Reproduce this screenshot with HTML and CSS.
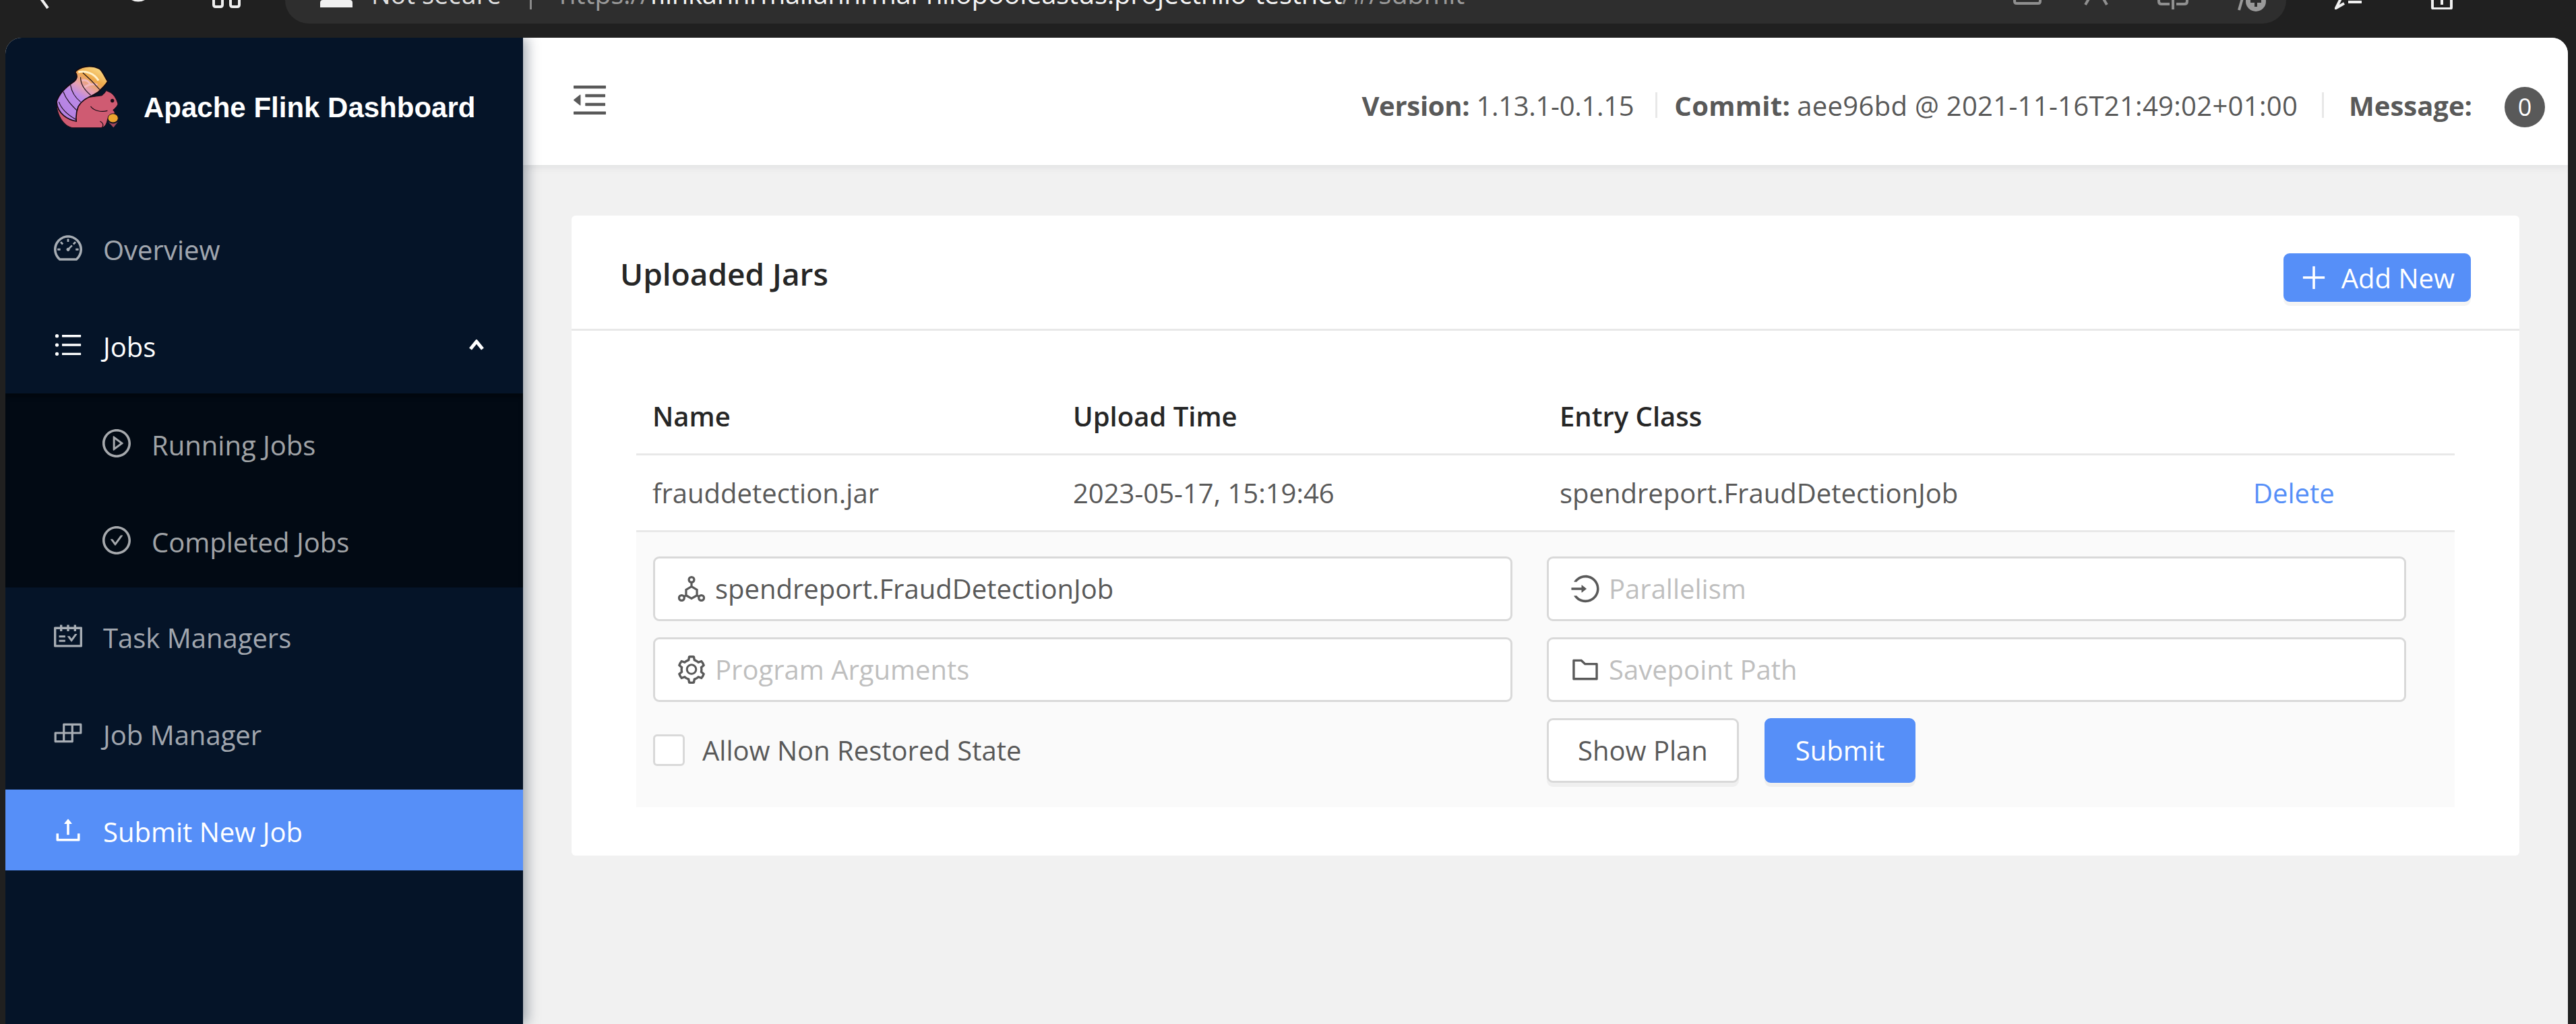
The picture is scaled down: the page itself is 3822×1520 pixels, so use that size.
FILE: index.html
```html
<!DOCTYPE html>
<html lang="en">
<head>
    <meta charset="UTF-8">
    <title>Apache Flink Dashboard</title>
    <link rel="stylesheet" href="styles.css">
</head>
<body>

    <!-- Browser toolbar, cut off by the top of the screenshot -->
    <div class="browser-bar">
        <svg class="bar-icon back-icon" viewBox="0 0 20 40"><path d="M2 -10 L18 12"/></svg>
        <svg class="bar-icon reload-icon" viewBox="0 0 44 40"><path d="M5 -10 A 19 19 0 0 0 39 -10"/></svg>
        <svg class="bar-icon tabs-icon" viewBox="0 0 44 40"><path d="M3 -8 V7 Q3 10 6 10 H13 Q16 10 16 7 V-8 M28 -8 V7 Q28 10 31 10 H38 Q41 10 41 7 V-8"/></svg>
        <div class="address-bar">
            <svg class="lock-icon" viewBox="0 0 48 12"><path d="M4 0 H16 A7 7 0 0 1 32 0 H44 Q48 0 48 4 V11 H0 V4 Q0 0 4 0 Z"/></svg>
            <span class="not-secure">Not secure</span>
            <span class="address-sep"></span>
            <span class="url"><span class="url-dim">https://</span>flinkahnrmaliahnrmal-hilopooleastus.projecthilo-testnet<span class="url-dim">/#/submit</span></span>
            <span class="address-tools">
                <svg class="bar-icon tool-a" viewBox="0 0 42 10"><path d="M2 -10 V2 Q2 5 5 5 H37 Q40 5 40 2 V-10"/></svg>
                <svg class="bar-icon tool-b" viewBox="0 0 36 10"><path d="M12 -10 L2 7 M24 -10 L34 7"/></svg>
                <svg class="bar-icon tool-c" viewBox="0 0 46 16"><path d="M2 -8 V2 Q2 6 6 6 H18 M23 -8 V14 M28 6 H40 Q44 6 44 2 V-8"/></svg>
                <svg class="tool-d" viewBox="0 0 42 18"><path class="tool-d-line" d="M2 15 L8 -6"/><circle cx="27" cy="2" r="15"/><path class="tool-d-plus" d="M27 -6 V10 M19 2 H35"/></svg>
            </span>
        </div>
        <svg class="bar-icon fav-icon" viewBox="0 0 42 14"><path d="M12 -8 L2 12 L14 5 M20 3 H40"/></svg>
        <svg class="bar-icon share-icon" viewBox="0 0 38 14"><path d="M2 -8 L8 0 M8 -6 V11 Q8 13 10 13 H34 Q36 13 36 11 V-6 M22 -4 V7"/></svg>
    </div>

    <div class="app">
        <!-- Sidebar -->
        <aside class="sidebar">
            <div class="logo">
                <svg class="logo-img" viewBox="95 62 280 280">
                    <defs>
                        <linearGradient id="tailFill" x1="0.75" y1="0" x2="0.2" y2="1">
                            <stop offset="0" stop-color="#f9d680"/>
                            <stop offset="0.2" stop-color="#eea94a"/>
                            <stop offset="0.38" stop-color="#e6a0b0"/>
                            <stop offset="0.55" stop-color="#bb8ae8"/>
                            <stop offset="1" stop-color="#b37fe0"/>
                        </linearGradient>
                    </defs>
                    <path class="logo-body" d="M98 235 C120 220 240 205 300 197 C310 190 315 182 320 175 L333 181 C352 188 366 212 372 235 C366 250 356 256 350 262 C360 270 360 280 350 285 L326 300 C322 320 318 335 300 341 L170 341 C130 335 100 285 98 235 Z"/>
                    <path class="logo-tail" d="M186 312 C150 305 102 280 98 225 C108 188 138 160 175 135 C192 122 192 105 181 92 C200 68 250 58 290 78 C305 90 315 118 326 133 C318 150 300 165 285 180 C260 200 215 208 195 245 C185 270 184 295 186 312 Z"/>
                    <path class="logo-feather" d="M195 92 C225 85 265 95 285 130"/>
                    <path class="logo-feather logo-feather-pink" d="M215 165 C235 150 255 140 280 150 M210 130 C225 125 240 130 250 150"/>
                    <path class="logo-line" d="M186 305 C150 285 120 260 108 225 M190 265 C165 240 140 215 128 180 M205 225 C180 205 165 180 160 150 M250 195 C225 175 205 150 205 115 M290 170 C265 140 245 120 215 95"/>
                    <path class="logo-line" d="M250 245 C265 265 295 272 325 265 M300 340 C310 330 305 318 292 312"/>
                    <circle class="logo-eye" cx="347" cy="220" r="8"/>
                    <path class="logo-cap" d="M326 312 C340 326 362 326 374 312 L352 340 Z"/>
                    <ellipse class="logo-nut" cx="350" cy="298" rx="23" ry="20"/>
                </svg>
                <span class="logo-title">Apache Flink Dashboard</span>
            </div>

            <nav class="menu">
                <a class="menu-item">
                    <svg class="icon" viewBox="64 64 896 896"><path d="M924.8 385.6a446.7 446.7 0 0 0-96-142.4 446.7 446.7 0 0 0-142.4-96C631.1 123.8 572.5 112 512 112s-119.1 11.8-174.4 35.2a446.7 446.7 0 0 0-142.4 96 446.7 446.7 0 0 0-96 142.4C75.8 440.9 64 499.5 64 560c0 132.7 58.3 257.7 159.9 343.1l1.7 1.4c5.8 4.8 13.1 7.5 20.6 7.5h531.7c7.5 0 14.8-2.7 20.6-7.5l1.7-1.4C901.7 817.7 960 692.7 960 560c0-60.5-11.9-119.1-35.2-174.4zM761.4 836H262.6A371.12 371.12 0 0 1 140 560c0-99.4 38.7-192.8 109-263 70.3-70.3 163.7-109 263-109 99.4 0 192.8 38.7 263 109 70.3 70.3 109 163.7 109 263 0 105.6-44.5 205.5-122.6 276zM623.5 421.5a8.03 8.03 0 0 0-11.3 0L527.7 506c-18.7-5-39.4-.2-54.1 14.5a55.95 55.95 0 0 0 0 79.2 55.95 55.95 0 0 0 79.2 0 55.87 55.87 0 0 0 14.5-54.1l84.5-84.5c3.1-3.1 3.1-8.2 0-11.3l-28.3-28.3zM490 320h44c4.4 0 8-3.6 8-8v-80c0-4.4-3.6-8-8-8h-44c-4.4 0-8 3.6-8 8v80c0 4.4 3.6 8 8 8zm260 218v44c0 4.4 3.6 8 8 8h80c4.4 0 8-3.6 8-8v-44c0-4.4-3.6-8-8-8h-80c-4.4 0-8 3.6-8 8zm12.7-197.2l-31.1-31.1a8.03 8.03 0 0 0-11.3 0l-56.6 56.6a8.03 8.03 0 0 0 0 11.3l31.1 31.1c3.1 3.1 8.2 3.1 11.3 0l56.6-56.6c3.1-3.1 3.1-8.2 0-11.3zm-458.6-31.1a8.03 8.03 0 0 0-11.3 0l-31.1 31.1a8.03 8.03 0 0 0 0 11.3l56.6 56.6c3.1 3.1 8.2 3.1 11.3 0l31.1-31.1c3.1-3.1 3.1-8.2 0-11.3l-56.6-56.6zM262 530h-80c-4.4 0-8 3.6-8 8v44c0 4.4 3.6 8 8 8h80c4.4 0 8-3.6 8-8v-44c0-4.4-3.6-8-8-8z"/></svg>
                    <span>Overview</span>
                </a>
                <a class="menu-item menu-open">
                    <svg class="icon" viewBox="64 64 896 896"><path d="M912 192H328c-4.4 0-8 3.6-8 8v56c0 4.4 3.6 8 8 8h584c4.4 0 8-3.6 8-8v-56c0-4.4-3.6-8-8-8zm0 284H328c-4.4 0-8 3.6-8 8v56c0 4.4 3.6 8 8 8h584c4.4 0 8-3.6 8-8v-56c0-4.4-3.6-8-8-8zm0 284H328c-4.4 0-8 3.6-8 8v56c0 4.4 3.6 8 8 8h584c4.4 0 8-3.6 8-8v-56c0-4.4-3.6-8-8-8zM104 228a56 56 0 1 0 112 0 56 56 0 1 0-112 0zm0 284a56 56 0 1 0 112 0 56 56 0 1 0-112 0zm0 284a56 56 0 1 0 112 0 56 56 0 1 0-112 0z"/></svg>
                    <span>Jobs</span>
                    <svg class="chevron" viewBox="0 0 24 16"><path d="M3 14 L12 3 L21 14"/></svg>
                </a>
                <div class="submenu">
                    <a class="menu-item sub-item">
                        <svg class="icon" viewBox="64 64 896 896"><path d="M512 64C264.6 64 64 264.6 64 512s200.6 448 448 448 448-200.6 448-448S759.4 64 512 64zm0 820c-205.4 0-372-166.6-372-372s166.6-372 372-372 372 166.6 372 372-166.6 372-372 372z"/><path d="M719.4 499.1l-296.1-215A15.9 15.9 0 0 0 398 297v430c0 13.1 14.8 20.5 25.3 12.9l296.1-215a15.9 15.9 0 0 0 0-25.8zm-257.6 134V390.9L628.5 512 461.8 633.1z"/></svg>
                        <span>Running Jobs</span>
                    </a>
                    <a class="menu-item sub-item">
                        <svg class="icon" viewBox="64 64 896 896"><path d="M512 64C264.6 64 64 264.6 64 512s200.6 448 448 448 448-200.6 448-448S759.4 64 512 64zm0 820c-205.4 0-372-166.6-372-372s166.6-372 372-372 372 166.6 372 372-166.6 372-372 372z"/><path d="M699 353h-46.9c-10.2 0-19.9 4.9-25.9 13.3L469 584.3l-71.2-98.8c-6-8.3-15.6-13.3-25.9-13.3H325c-6.5 0-10.3 7.4-6.5 12.7l124.6 172.8a31.8 31.8 0 0 0 51.7 0l210.6-292c3.9-5.3.1-12.7-6.4-12.7z"/></svg>
                        <span>Completed Jobs</span>
                    </a>
                </div>
                <a class="menu-item">
                    <svg class="icon" viewBox="64 64 896 896"><path d="M928 224H768v-56c0-4.4-3.6-8-8-8h-56c-4.4 0-8 3.6-8 8v56H548v-56c0-4.4-3.6-8-8-8h-56c-4.4 0-8 3.6-8 8v56H328v-56c0-4.4-3.6-8-8-8h-56c-4.4 0-8 3.6-8 8v56H96c-17.7 0-32 14.3-32 32v576c0 17.7 14.3 32 32 32h832c17.7 0 32-14.3 32-32V256c0-17.7-14.3-32-32-32zm-40 568H136V296h120v56c0 4.4 3.6 8 8 8h56c4.4 0 8-3.6 8-8v-56h148v56c0 4.4 3.6 8 8 8h56c4.4 0 8-3.6 8-8v-56h148v56c0 4.4 3.6 8 8 8h56c4.4 0 8-3.6 8-8v-56h120v496zM416 496H232c-4.4 0-8 3.6-8 8v48c0 4.4 3.6 8 8 8h184c4.4 0 8-3.6 8-8v-48c0-4.4-3.6-8-8-8zm0 136H232c-4.4 0-8 3.6-8 8v48c0 4.4 3.6 8 8 8h184c4.4 0 8-3.6 8-8v-48c0-4.4-3.6-8-8-8zm308.2-177.4L620.6 598.3l-52.8-73c-3-4.2-7.8-6.6-12.9-6.6H500c-6.5 0-10.3 7.4-6.5 12.7l114.1 158.2a15.9 15.9 0 0 0 25.8 0l165-228.7c3.8-5.3 0-12.7-6.5-12.7H737c-5-.1-9.8 2.4-12.8 6.5z"/></svg>
                    <span>Task Managers</span>
                </a>
                <a class="menu-item">
                    <svg class="icon" viewBox="64 64 896 896"><path d="M916 210H376c-17.7 0-32 14.3-32 32v236H108c-17.7 0-32 14.3-32 32v272c0 17.7 14.3 32 32 32h540c17.7 0 32-14.3 32-32V546h236c17.7 0 32-14.3 32-32V242c0-17.7-14.3-32-32-32zm-504 68h200v200H412V278zm-68 468H144V546h200v200zm268 0H412V546h200v200zm268-268H680V278h200v200z"/></svg>
                    <span>Job Manager</span>
                </a>
                <a class="menu-item menu-selected">
                    <svg class="icon" viewBox="64 64 896 896"><path d="M400 317.7h73.9V656c0 4.4 3.6 8 8 8h60c4.4 0 8-3.6 8-8V317.7H624c6.7 0 10.4-7.7 6.3-12.9L518.3 163a8 8 0 0 0-12.6 0l-112 141.7c-4.1 5.3-.4 13 6.3 13zM878 626h-60c-4.4 0-8 3.6-8 8v154H214V634c0-4.4-3.6-8-8-8h-60c-4.4 0-8 3.6-8 8v198c0 17.7 14.3 32 32 32h684c17.7 0 32-14.3 32-32V634c0-4.4-3.6-8-8-8z"/></svg>
                    <span>Submit New Job</span>
                </a>
            </nav>
        </aside>

        <div class="main">
            <!-- Header -->
            <header class="top-header">
                <svg class="fold-icon" viewBox="112 160 800 704" preserveAspectRatio="none"><path d="M408 442h480c4.4 0 8-3.6 8-8v-56c0-4.4-3.6-8-8-8H408c-4.4 0-8 3.6-8 8v56c0 4.4 3.6 8 8 8zm-8 204c0 4.4 3.6 8 8 8h480c4.4 0 8-3.6 8-8v-56c0-4.4-3.6-8-8-8H408c-4.4 0-8 3.6-8 8v56zm504-486H120c-4.4 0-8 3.6-8 8v56c0 4.4 3.6 8 8 8h784c4.4 0 8-3.6 8-8v-56c0-4.4-3.6-8-8-8zm0 632H120c-4.4 0-8 3.6-8 8v56c0 4.4 3.6 8 8 8h784c4.4 0 8-3.6 8-8v-56c0-4.4-3.6-8-8-8zM115.4 518.9L271.7 642c5.8 4.6 14.4.5 14.4-6.9V388.9c0-7.4-8.5-11.5-14.4-6.9L115.4 505.1a8.74 8.74 0 0 0 0 13.8z"/></svg>
                <div class="job-info">
                    <span class="info-item info-version"><strong>Version:</strong> 1.13.1-0.1.15</span>
                    <span class="info-item info-commit"><strong>Commit:</strong> aee96bd @ 2021-11-16T21:49:02+01:00</span>
                    <span class="info-item info-message"><strong>Message:</strong><span class="badge">0</span></span>
                </div>
            </header>

            <!-- Uploaded Jars -->
            <div class="content">
                <section class="card">
                    <div class="card-head">
                        <h2>Uploaded Jars</h2>
                        <button class="btn btn-primary btn-small">
                            <svg class="icon" viewBox="64 64 896 896"><path d="M482 152h60q8 0 8 8v704q0 8-8 8h-60q-8 0-8-8V160q0-8 8-8z"/><path d="M176 474h672q8 0 8 8v60q0 8-8 8H176q-8 0-8-8v-60q0-8 8-8z"/></svg>
                            Add New
                        </button>
                    </div>
                    <div class="card-body">
                        <table class="jar-table">
                            <thead>
                                <tr>
                                    <th class="col-name">Name</th>
                                    <th class="col-time">Upload Time</th>
                                    <th class="col-class">Entry Class</th>
                                    <th></th>
                                </tr>
                            </thead>
                            <tbody>
                                <tr>
                                    <td>frauddetection.jar</td>
                                    <td>2023-05-17, 15:19:46</td>
                                    <td>spendreport.FraudDetectionJob</td>
                                    <td><a class="delete-link">Delete</a></td>
                                </tr>
                            </tbody>
                        </table>
                        <form class="jar-form">
                            <div class="input-box">
                                <svg class="icon" viewBox="64 64 896 896"><g fill="none" stroke="currentColor" stroke-width="68"><circle cx="512" cy="224" r="84"/><circle cx="200" cy="800" r="84"/><circle cx="824" cy="800" r="84"/><path d="M512 308V440L340 540V720M512 440L684 540V720M280 760L340 720M744 760L684 720M340 720L512 820L684 720"/></g></svg>
                                <span>spendreport.FraudDetectionJob</span>
                            </div>
                            <div class="input-box placeholder">
                                <svg class="icon" viewBox="64 64 896 896"><path d="M521.7 82c-152.5-.4-286.7 78.5-363.4 197.7-3.4 5.3.4 12.3 6.7 12.3h70.3c4.8 0 9.3-2.1 12.3-5.8 7-8.5 14.5-16.7 22.4-24.5 32.6-32.5 70.5-58.1 112.7-75.9 43.6-18.4 90-27.8 137.9-27.8 47.9 0 94.3 9.3 137.9 27.8 42.2 17.8 80.1 43.4 112.7 75.9 32.6 32.5 58.1 70.4 76 112.5C865.7 417.8 875 464.1 875 512c0 47.9-9.4 94.2-27.8 137.8-17.8 42.1-43.4 80-76 112.5s-70.5 58.1-112.7 75.9A352.8 352.8 0 0 1 520.6 866c-47.9 0-94.3-9.4-137.9-27.8A353.84 353.84 0 0 1 270 762.3c-7.9-7.9-15.3-16.1-22.4-24.5-3-3.7-7.6-5.8-12.3-5.8H165c-6.3 0-10.2 7-6.7 12.3C234.9 863.2 368.5 942 520.6 942c236.2 0 428-190.1 430.4-425.6C953.4 277.1 761.3 82.6 521.7 82zM395.02 624v-76h-314c-4.4 0-8-3.6-8-8v-56c0-4.4 3.6-8 8-8h314v-76c0-6.7 7.8-10.5 13-6.3l141.9 112a8 8 0 0 1 0 12.6l-141.9 112c-5.2 4.1-13 .4-13-6.3z"/></svg>
                                <span>Parallelism</span>
                            </div>
                            <div class="input-box placeholder">
                                <svg class="icon" viewBox="64 64 896 896"><path d="M924.8 625.7l-65.5-56c3.1-19 4.7-38.4 4.7-57.8s-1.6-38.8-4.7-57.8l65.5-56a32.03 32.03 0 0 0 9.3-35.2l-.9-2.6a443.74 443.74 0 0 0-79.7-137.9l-1.8-2.1a32.12 32.12 0 0 0-35.1-9.5l-81.3 28.9c-30-24.6-63.5-44-99.7-57.6l-15.7-85a32.05 32.05 0 0 0-25.8-25.7l-2.7-.5c-52.1-9.4-106.9-9.4-159 0l-2.7.5a32.05 32.05 0 0 0-25.8 25.7l-15.8 85.4a351.86 351.86 0 0 0-99 57.4l-81.9-29.1a32 32 0 0 0-35.1 9.5l-1.8 2.1a446.02 446.02 0 0 0-79.7 137.9l-.9 2.6c-4.5 12.5-.8 26.5 9.3 35.2l66.3 56.6c-3.1 18.8-4.6 38-4.6 57.1 0 19.2 1.5 38.4 4.6 57.1L99 625.5a32.03 32.03 0 0 0-9.3 35.2l.9 2.6c18.1 50.4 44.9 96.9 79.7 137.9l1.8 2.1a32.12 32.12 0 0 0 35.1 9.5l81.9-29.1c29.8 24.5 63.1 43.9 99 57.4l15.8 85.4a32.05 32.05 0 0 0 25.8 25.7l2.7.5a449.4 449.4 0 0 0 159 0l2.7-.5a32.05 32.05 0 0 0 25.8-25.7l15.7-85a350 350 0 0 0 99.7-57.6l81.3 28.9a32 32 0 0 0 35.1-9.5l1.8-2.1c34.8-41.1 61.6-87.5 79.7-137.9l.9-2.6c4.5-12.3.8-26.3-9.3-35zM788.3 465.9c2.5 15.1 3.8 30.6 3.8 46.1s-1.3 31-3.8 46.1l-6.6 40.1 74.7 63.9a370.03 370.03 0 0 1-42.6 73.6L721 702.8l-31.4 25.8c-23.9 19.6-50.5 35-79.3 45.8l-38.1 14.3-17.9 97a377.5 377.5 0 0 1-85 0l-17.9-97.2-37.8-14.5c-28.5-10.8-55-26.2-78.7-45.7l-31.4-25.9-93.4 33.2c-17-22.9-31.2-47.6-42.6-73.6l75.5-64.5-6.5-40c-2.4-14.9-3.7-30.3-3.7-45.5 0-15.3 1.2-30.6 3.7-45.5l6.5-40-75.5-64.5c11.3-26.1 25.6-50.7 42.6-73.6l93.4 33.2 31.4-25.9c23.7-19.5 50.2-34.9 78.7-45.7l37.9-14.3 17.9-97.2c28.1-3.2 56.8-3.2 85 0l17.9 97 38.1 14.3c28.7 10.8 55.4 26.2 79.3 45.8l31.4 25.8 92.8-32.9c17 22.9 31.2 47.6 42.6 73.6L781.8 426l6.5 39.9zM512 326c-97.2 0-176 78.8-176 176s78.8 176 176 176 176-78.8 176-176-78.8-176-176-176zm79.2 255.2A111.6 111.6 0 0 1 512 614c-29.9 0-58-11.7-79.2-32.8A111.6 111.6 0 0 1 400 502c0-29.9 11.7-58 32.8-79.2C454 401.6 482.1 390 512 390c29.9 0 58 11.6 79.2 32.8A111.6 111.6 0 0 1 624 502c0 29.9-11.7 58-32.8 79.2z"/></svg>
                                <span>Program Arguments</span>
                            </div>
                            <div class="input-box placeholder">
                                <svg class="icon" viewBox="64 64 896 896"><path d="M880 298.4H521L403.7 186.2a8.15 8.15 0 0 0-5.5-2.2H144c-17.7 0-32 14.3-32 32v592c0 17.7 14.3 32 32 32h736c17.7 0 32-14.3 32-32V330.4c0-17.7-14.3-32-32-32zM840 768H184V256h188.5l119.6 114.4H840V768z"/></svg>
                                <span>Savepoint Path</span>
                            </div>
                            <label class="check-row">
                                <span class="check-box"></span>
                                <span>Allow Non Restored State</span>
                            </label>
                            <div class="form-actions">
                                <button type="button" class="btn btn-default">Show Plan</button>
                                <button type="button" class="btn btn-primary">Submit</button>
                            </div>
                        </form>
                    </div>
                </section>
            </div>
        </div>
    </div>

</body>
</html>
```

FILE: styles.css
```css
/* General Reset */
* {
    margin: 0;
    padding: 0;
    box-sizing: border-box;
}

body {
    width: 3822px;
    height: 1520px;
    overflow: hidden;
    background-color: #202020;
    font-family: 'Open Sans', 'Noto Sans', sans-serif;
    font-size: 40px;
    color: #595959;
}

svg {
    display: block;
    flex-shrink: 0;
}

/* Browser toolbar */
.browser-bar {
    display: flex;
    height: 56px;
    overflow: hidden;
    background-color: #202020;
}

.bar-icon {
    fill: none;
    stroke: #f0f0f0;
    stroke-width: 4;
}

.back-icon {
    width: 20px;
    height: 40px;
    margin-left: 53px;
}

.reload-icon {
    width: 44px;
    height: 40px;
    margin-left: 110px;
}

.tabs-icon {
    width: 44px;
    height: 40px;
    margin-left: 87px;
}

.address-bar {
    display: flex;
    align-items: flex-start;
    flex-shrink: 0;
    width: 2969px;
    height: 35px;
    margin-left: 65px;
    padding-left: 52px;
    overflow: hidden;
    background-color: #2e2e2e;
    border-radius: 0 0 40px 40px;
    line-height: 50px;
    white-space: nowrap;
}

.lock-icon {
    width: 48px;
    height: 12px;
    fill: #f0f0f0;
}

.not-secure {
    flex-shrink: 0;
    width: 194px;
    margin: -34px 0 0 28px;
    font-size: 38px;
    color: #e0e0e0;
}

.address-sep {
    flex-shrink: 0;
    width: 3px;
    height: 14px;
    margin-left: 41px;
    background-color: #8a8a8a;
}

.url {
    flex-shrink: 0;
    width: 1342px;
    margin: -34px 0 0 41px;
    font-size: 40px;
    letter-spacing: -0.3px;
    color: #f5f5f5;
}

.url-dim {
    color: #9a9a9a;
}

.address-tools {
    display: flex;
    align-items: flex-start;
}

.tool-a {
    width: 42px;
    height: 10px;
    margin-left: 815px;
    stroke: #8f8f8f;
}

.tool-b {
    width: 36px;
    height: 10px;
    margin-left: 63px;
    stroke: #8f8f8f;
}

.tool-c {
    width: 46px;
    height: 16px;
    margin-left: 73px;
    stroke: #8f8f8f;
}

.tool-d {
    width: 42px;
    height: 18px;
    margin-left: 73px;
    fill: #9a9a9a;
}

.tool-d-line {
    fill: none;
    stroke: #9a9a9a;
    stroke-width: 4;
}

.tool-d-plus {
    fill: none;
    stroke: #2e2e2e;
    stroke-width: 4;
}

.fav-icon {
    width: 42px;
    height: 14px;
    margin-left: 72px;
}

.share-icon {
    width: 38px;
    height: 14px;
    margin-left: 95px;
}

/* App frame */
.app {
    display: flex;
    width: 3802px;
    height: 1464px;
    margin-left: 8px;
    overflow: hidden;
    background-color: #f1f1f1;
    border-radius: 24px 24px 0 0;
}

/* Sidebar */
.sidebar {
    position: relative;
    z-index: 2;
    flex: 0 0 768px;
    background-color: #051428;
    box-shadow: 6px 0 18px rgba(0, 21, 41, 0.35);
}

.logo {
    display: flex;
    align-items: center;
    height: 240px;
    padding: 0 0 66px 75px;
}

.logo-img {
    width: 93px;
    height: 93px;
}

.logo-body {
    fill: #cf5b72;
    stroke: #1a0d18;
    stroke-width: 3;
}

.logo-tail {
    fill: url(#tailFill);
    stroke: #14080f;
    stroke-width: 5;
}

.logo-feather {
    fill: none;
    stroke: #fff1c9;
    stroke-width: 9;
}

.logo-feather-pink {
    stroke: #f2b9bd;
}

.logo-line {
    fill: none;
    stroke: #1a0d18;
    stroke-width: 3.5;
}

.logo-eye {
    fill: #1a0d18;
}

.logo-cap {
    fill: #a3485c;
}

.logo-nut {
    fill: #eda62f;
    stroke: #1a0d18;
    stroke-width: 3;
}

.logo-title {
    margin: 34px 0 0 37px;
    font-family: 'Liberation Sans', Arial, sans-serif;
    font-size: 42px;
    font-weight: 700;
    color: white;
}

.menu,
.submenu {
    display: flex;
    flex-direction: column;
}

.menu-item {
    display: flex;
    align-items: center;
    flex-shrink: 0;
    gap: 31px;
    height: 120px;
    margin: 12px 0;
    padding-left: 72px;
    color: rgba(255, 255, 255, 0.65);
}

.menu-item span {
    margin-top: 4px;
}

.icon {
    width: 42px;
    height: 42px;
    fill: currentColor;
}

.menu-open {
    position: relative;
    color: white;
}

.chevron {
    position: absolute;
    top: 52px;
    right: 57px;
    width: 24px;
    height: 16px;
    fill: none;
    stroke: white;
    stroke-width: 5;
}

.submenu {
    height: 288px;
    padding-top: 2px;
    background-color: #020a14;
    box-shadow: inset 0 6px 6px rgba(0, 0, 0, 0.3);
}

.sub-item {
    padding-left: 144px;
}

.menu-selected {
    background-color: #568ff8;
    color: white;
}

/* Header */
.main {
    flex: 1;
    min-width: 0;
}

.top-header {
    position: relative;
    z-index: 1;
    display: flex;
    justify-content: space-between;
    align-items: center;
    height: 189px;
    padding: 0 34px 0 75px;
    background-color: white;
    box-shadow: 0 3px 12px rgba(0, 21, 41, 0.08);
}

.fold-icon {
    width: 48px;
    height: 43px;
    margin-bottom: 4px;
    fill: #595959;
}

.job-info {
    display: flex;
    align-items: center;
    margin-top: 11px;
    white-space: nowrap;
}

.info-item {
    display: flex;
    align-items: center;
    gap: 10px;
}

.info-version {
    letter-spacing: -0.3px;
}

.info-commit {
    height: 38px;
    margin-left: 32px;
    padding: 0 36px 0 25px;
    border-left: 3px solid #e8e8e8;
    border-right: 3px solid #e8e8e8;
    letter-spacing: 0.3px;
}

.info-message {
    margin-left: 37px;
}

.badge {
    display: block;
    width: 60px;
    height: 60px;
    margin: 6px 0 0 38px;
    border-radius: 50%;
    background-color: #595959;
    color: white;
    font-size: 36px;
    line-height: 60px;
    text-align: center;
}

/* Uploaded Jars card */
.content {
    padding: 75px 72px 0;
}

.card {
    background-color: white;
    border-radius: 6px;
}

.card-head {
    display: flex;
    justify-content: space-between;
    align-items: center;
    height: 171px;
    padding: 0 72px;
    border-bottom: 3px solid #e8e8e8;
}

.card-head h2 {
    margin-top: 4px;
    font-size: 46px;
    font-weight: 600;
    color: #262626;
}

.btn {
    display: inline-flex;
    align-items: center;
    height: 96px;
    padding: 0 43px;
    border-radius: 9px;
    font-family: inherit;
    font-size: 40px;
    box-shadow: 0 6px 0 rgba(0, 0, 0, 0.045);
}

.btn-primary {
    background-color: #568ff8;
    border: 3px solid #568ff8;
    color: white;
}

.btn-default {
    background-color: white;
    border: 3px solid #d9d9d9;
    color: #595959;
}

.btn-small {
    gap: 20px;
    height: 72px;
    margin-top: 16px;
    padding: 0 21px;
}

.card-body {
    padding: 72px 96px;
}

.jar-table {
    width: 100%;
    border-collapse: collapse;
    table-layout: fixed;
}

.jar-table th,
.jar-table td {
    padding-left: 24px;
    text-align: left;
    border-bottom: 3px solid #e8e8e8;
}

.jar-table th {
    height: 111px;
    font-weight: 600;
    color: #262626;
}

.jar-table td {
    height: 114px;
}

.col-name {
    width: 624px;
}

.col-time {
    width: 722px;
}

.col-class {
    width: 1029px;
}

.delete-link {
    color: #568ff8;
}

/* Expanded row form */
.jar-form {
    display: grid;
    grid-template-columns: 1275px 1275px;
    grid-template-rows: 96px 96px 96px;
    column-gap: 51px;
    row-gap: 24px;
    padding: 36px 0 36px 25px;
    background-color: #fafafa;
}

.input-box {
    display: flex;
    align-items: center;
    gap: 14px;
    padding-left: 33px;
    background-color: white;
    border: 3px solid #d9d9d9;
    border-radius: 9px;
}

.placeholder span {
    color: #bfbfbf;
}

.check-row {
    display: flex;
    align-items: center;
    gap: 26px;
}

.check-box {
    width: 47px;
    height: 47px;
    background-color: white;
    border: 3px solid #d9d9d9;
    border-radius: 6px;
}

.form-actions {
    display: flex;
    gap: 38px;
}
```
